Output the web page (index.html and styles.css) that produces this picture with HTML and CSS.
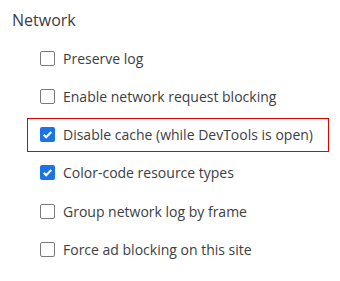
FILE: index.html
```html
<!DOCTYPE html>
<html lang="en">
<head>
    <meta charset="UTF-8" />
    <title>Network settings</title>
    <link rel="stylesheet" href="styles.css">
</head>
<body>
    <section class="settings">
        <h3>Network</h3>
        <ul class="options">
            <li class="option"><span class="box"></span>Preserve log</li>
            <li class="option"><span class="box"></span>Enable network request blocking</li>
            <li class="option highlight"><span class="box checked"><svg viewBox="0 0 16 16"><path d="M4 8.3l2.6 2.6L12 5.4" /></svg></span>Disable cache (while DevTools is open)</li>
            <li class="option"><span class="box checked"><svg viewBox="0 0 16 16"><path d="M4 8.3l2.6 2.6L12 5.4" /></svg></span>Color-code resource types</li>
            <li class="option"><span class="box"></span>Group network log by frame</li>
            <li class="option"><span class="box"></span>Force ad blocking on this site</li>
        </ul>
    </section>
</body>
</html>
```

FILE: styles.css
```css
:root {
    --text-color: #3c4043;
    --blue: #1a73e8;
    --box-border: #7a7a7a;
    --highlight: #e00000;
}

body {
    margin: 0;
    background: #ffffff;
    font-family: "Open Sans", "Noto Sans", sans-serif;
    color: var(--text-color);
}

.settings {
    padding: 9px 12px;
}

h3 {
    margin: 0;
    font-size: 16px;
    font-weight: 400;
    line-height: 22px;
}

.options {
    list-style: none;
    margin: 0;
    padding: 10px 0 0 15px;
}

.option {
    display: flex;
    align-items: center;
    gap: 8px;
    height: 34px;
    margin-bottom: 4.3px;
    padding-left: 12px;
    font-size: 14px;
    border: 1px solid transparent;
    box-sizing: border-box;
    width: 302px;
}

.option.highlight {
    border-color: var(--highlight);
}

.box {
    flex: none;
    width: 15px;
    height: 15px;
    box-sizing: border-box;
    border: 1px solid var(--box-border);
    border-radius: 2px;
    display: inline-flex;
}

.box.checked {
    border: none;
    background: var(--blue);
}

.box svg {
    width: 15px;
    height: 15px;
    fill: none;
    stroke: #ffffff;
    stroke-width: 2.2;
}
```
